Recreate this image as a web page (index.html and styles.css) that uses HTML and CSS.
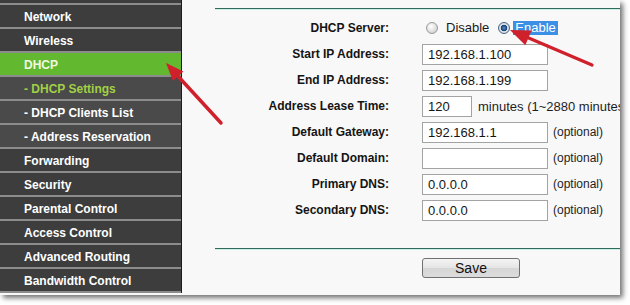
FILE: index.html
```html
<!DOCTYPE html>
<html>
<head>
<meta charset="utf-8">
<title>DHCP Settings</title>
<link rel="stylesheet" href="styles.css">
</head>
<body>
<div class="page">
  <nav class="sidebar">
    <div class="nav-item">Network</div>
    <div class="nav-item">Wireless</div>
    <div class="nav-item active">DHCP</div>
    <div class="nav-item sub current">- DHCP Settings</div>
    <div class="nav-item sub">- DHCP Clients List</div>
    <div class="nav-item sub">- Address Reservation</div>
    <div class="nav-item">Forwarding</div>
    <div class="nav-item">Security</div>
    <div class="nav-item">Parental Control</div>
    <div class="nav-item">Access Control</div>
    <div class="nav-item">Advanced Routing</div>
    <div class="nav-item last">Bandwidth Control</div>
  </nav>
  <main class="content">
    <div class="rule"></div>
    <div class="form">
      <div class="label">DHCP Server:</div>
      <div class="value">
        <span class="radio"></span><span class="radio-label">Disable</span>
        <span class="radio checked"></span><span class="radio-label selected">Enable</span>
      </div>

      <div class="label">Start IP Address:</div>
      <div class="value"><input class="field" type="text" value="192.168.1.100"></div>

      <div class="label">End IP Address:</div>
      <div class="value"><input class="field" type="text" value="192.168.1.199"></div>

      <div class="label">Address Lease Time:</div>
      <div class="value"><input class="field short" type="text" value="120"><span class="note long">minutes (1~2880 minutes)</span></div>

      <div class="label">Default Gateway:</div>
      <div class="value"><input class="field" type="text" value="192.168.1.1"><span class="note">(optional)</span></div>

      <div class="label">Default Domain:</div>
      <div class="value"><input class="field" type="text" value=""><span class="note">(optional)</span></div>

      <div class="label">Primary DNS:</div>
      <div class="value"><input class="field" type="text" value="0.0.0.0"><span class="note">(optional)</span></div>

      <div class="label">Secondary DNS:</div>
      <div class="value"><input class="field" type="text" value="0.0.0.0"><span class="note">(optional)</span></div>
    </div>
    <div class="rule bottom"></div>
    <div class="actions">
      <button class="save" type="button">Save</button>
    </div>
  </main>
  <svg class="arrows" width="630" height="305" viewBox="0 0 630 305">
    <line x1="221" y1="123" x2="176" y2="74" stroke="#d0202c" stroke-width="3.5" stroke-linecap="round"/>
    <polygon points="166,63 183.4,71.6 173,81" fill="#d0202c"/>
    <line x1="592" y1="65" x2="524" y2="36" stroke="#d0202c" stroke-width="3.2" stroke-linecap="round"/>
    <polygon points="510,30 531.5,30.4 525.3,45.2" fill="#d0202c"/>
  </svg>
</div>
</body>
</html>
```
FILE: styles.css
```css
html, body {
  margin: 0;
  padding: 0;
  background: #ffffff;
}

body {
  width: 630px;
  height: 305px;
  overflow: hidden;
  font-family: "Liberation Sans", Arial, sans-serif;
}

.page {
  position: relative;
  width: 620px;
  height: 295px;
  display: flex;
  align-items: flex-start;
  background: #f8f8f8;
  box-shadow: 3px 3px 5px rgba(0, 0, 0, 0.55);
  overflow: hidden;
}

.sidebar {
  width: 181px;
  flex: none;
  padding-top: 3px;
  background: #3d3d3d;
  border-right: 1px solid #1c1c1c;
}

.nav-item {
  height: 21px;
  padding-top: 1px;
  line-height: 22px;
  padding-left: 24px;
  border-top: 2px solid #8c8c8c;
  color: #ffffff;
  font-weight: bold;
  font-size: 12px;
  white-space: nowrap;
}

.nav-item.last {
  border-bottom: 2px solid #8c8c8c;
}

.nav-item.sub {
  background: #4a4a4a;
}

.nav-item.active {
  background: #62b82e;
  color: #f1f8e4;
}

.nav-item.current {
  color: #a2d045;
}

.content {
  flex: 1;
  padding-top: 8px;
  padding-left: 33px;
}

.rule {
  height: 1px;
  background: #2f6a5d;
  box-shadow: 0 1px 0 #cdeee2;
}

.form {
  margin-top: 6px;
  display: grid;
  grid-template-columns: 174px 1fr;
  grid-auto-rows: 26px;
  column-gap: 33px;
  align-items: center;
}

.label {
  text-align: right;
  font-weight: bold;
  font-size: 12px;
  color: #141414;
  white-space: nowrap;
}

.value {
  display: flex;
  align-items: center;
  white-space: nowrap;
}

.radio {
  display: inline-block;
  box-sizing: border-box;
  width: 12px;
  height: 12px;
  border-radius: 50%;
  border: 1px solid #9a9a9a;
  background: radial-gradient(circle at 40% 35%, #ffffff 0, #e6e6e6 45%, #c4c4c4 100%);
  margin-left: 4px;
}

.radio.checked {
  margin-left: 9px;
  border-color: #4d6580;
  background: radial-gradient(circle at 50% 50%, #5a8fc8 0, #1d4a7e 2.5px, #1d4a7e 3px, #dfe6ee 3.6px, #b9c4d0 100%);
}

.radio-label {
  font-size: 13px;
  color: #1a1a1a;
  margin-left: 8px;
  line-height: 14px;
}

.radio-label.selected {
  margin-left: 3px;
  padding: 0 2px;
  background: #3b8fe4;
  color: #ffffff;
}

.field {
  box-sizing: border-box;
  width: 126px;
  height: 21px;
  margin: 0;
  padding: 0 5px;
  border: 1px solid #a3a3a3;
  background: #ffffff;
  font-family: "Liberation Sans", Arial, sans-serif;
  font-size: 13px;
  color: #151515;
  outline: none;
}

.field.short {
  width: 50px;
}

.note {
  margin-left: 5px;
  font-size: 12px;
  color: #1e1e1e;
}

.note.long {
  margin-left: 6px;
  font-size: 13px;
}

.rule.bottom {
  margin-top: 25px;
}

.actions {
  padding-left: 207px;
  padding-top: 9px;
}

.save {
  display: block;
  width: 98px;
  height: 20px;
  margin: 0;
  padding: 0;
  border: 1px solid #707070;
  border-radius: 3px;
  background: linear-gradient(#f4f4f4, #e4e4e4 50%, #d6d6d6 51%, #dcdcdc);
  font-family: "Liberation Sans", Arial, sans-serif;
  font-size: 14px;
  color: #111111;
}

.arrows {
  position: absolute;
  left: 0;
  top: 0;
  pointer-events: none;
}
```
